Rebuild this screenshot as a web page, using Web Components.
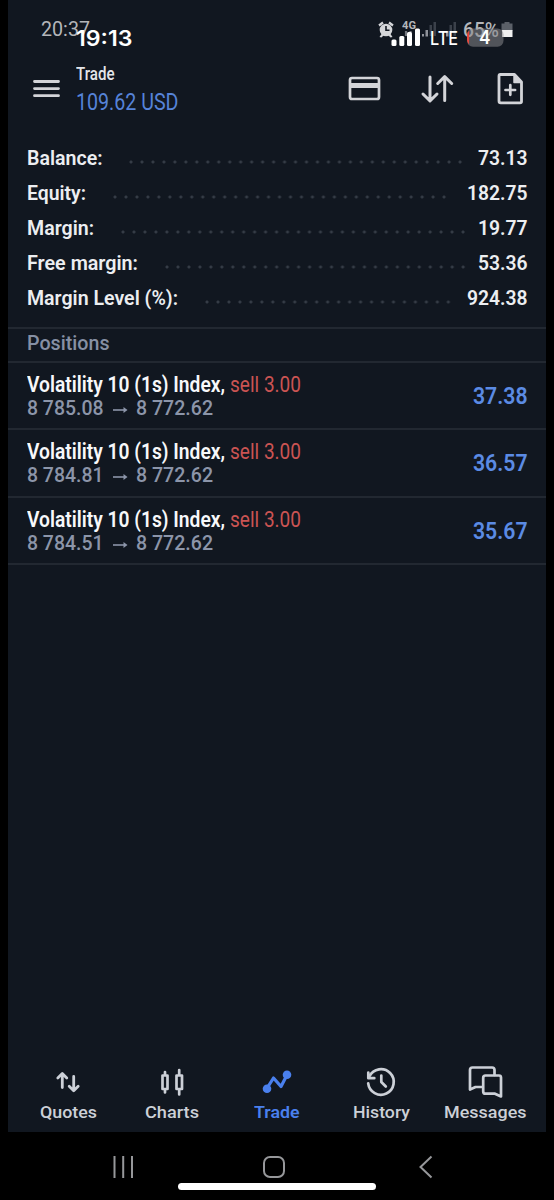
<!DOCTYPE html>
<html lang="en">
<head>
<meta charset="utf-8">
<title>Trade</title>
<style>
html,body{margin:0;background:#000}
body{font-family:Roboto,"Liberation Sans",sans-serif;width:554px;height:1200px;overflow:hidden}
</style>
</head>
<body>
<trade-screen></trade-screen>
<script>
function define(name, html, init) {
  const tpl = document.createElement('template');
  tpl.innerHTML = html;
  customElements.define(name, class extends HTMLElement {
    connectedCallback() {
      if (this.shadowRoot) return;
      const root = this.attachShadow({mode: 'open'});
      if (init) init.call(this, root, tpl);
      else root.append(tpl.content.cloneNode(true));
    }
  });
}

/* Text condensed or widened to an exact width (w), at font size s. */
define('fit-text', `<style>
:host{display:block;flex:none;white-space:pre}
span{display:inline-block;transform-origin:0 50%;white-space:pre}
</style><span><slot></slot></span>`, function (root, tpl) {
  root.append(tpl.content.cloneNode(true));
  const w = +this.getAttribute('w');
  this.style.fontSize = this.getAttribute('s') + 'px';
  const span = root.querySelector('span');
  const natural = span.getBoundingClientRect().width;
  this.style.width = w + 'px';
  if (natural) span.style.transform = 'scaleX(' + w / natural + ')';
});

define('status-overlay', `<style>
:host{display:block;position:relative;height:56px}
svg{position:absolute;left:0;top:0}
fit-text{position:absolute;line-height:24px}
.a{color:#b4b6ba}
.i{color:#fff;font-family:Inter,sans-serif}
</style>
<fit-text class="a" w="49" s="19.5" style="left:41px;top:17.5px">20:37</fit-text>
<fit-text class="a" w="14" s="11" style="left:401.5px;top:13.5px;font-weight:700">4G</fit-text>
<fit-text class="a" w="36" s="20" style="left:462.5px;top:17.5px;font-weight:500">65%</fit-text>
<svg width="554" height="56" viewBox="0 0 554 56">
<g fill="#d5d6d9"><circle cx="386" cy="30" r="6.3"/><path d="M381.5 34l-2 3 2 .5 2-2zM390.5 34l2 3-2 .5-2-2z"/></g>
<path d="M379 25.5l4-3M393 25.5l-4-3" stroke="#d5d6d9" stroke-width="2.2"/>
<path d="M386 26v4.300h3.500" fill="none" stroke="#111720" stroke-width="1.6"/>
<path d="M406 31v5M410.500 31v5" stroke="#777b82" stroke-width="2.200"/>
<g fill="#3b414a"><path d="M429.500 25h2.500v11h-2.500zM433.500 22h2.500v14h-2.500zM449.500 25h2.500v11h-2.500zM453.500 22h2.500v14h-2.500z"/></g>
<path d="M422 34h2v2.500h-2zM425.500 30h2.500v6.500h-2.500zM446 31h2.500v5.500H446z" fill="#8f9299"/>
<path d="M504.500 22h5v1.500h3V31h-11v-7.500h3z" fill="#5b6068"/>
<path d="M502 30h10.500v7H502z" fill="#f0f0f0"/>
<g fill="#fff"><rect x="391.500" y="39.500" width="5" height="6.500" rx="1.500"/><rect x="399.300" y="36" width="5" height="10" rx="1.500"/><rect x="407" y="32" width="5" height="14" rx="1.500"/><rect x="415" y="28.500" width="5" height="17.500" rx="1.500"/></g>
<rect x="467" y="28.500" width="36.500" height="18.300" rx="6" fill="#86878b" fill-opacity=".55"/>
<path d="M469.300 30.500Q467 32 467 35v5q0 2.500 2 4.500z" fill="#e6473d"/>
</svg>
<fit-text class="i" w="56.500" s="21.500" style="left:76px;top:26px;font-weight:600">19:13</fit-text>
<fit-text class="i" w="28" s="18.800" style="left:429.500px;top:26.700px;font-weight:500">LTE</fit-text>
<fit-text class="i" w="11.500" s="18" style="left:479.300px;top:25.500px;font-weight:600">4</fit-text>`);

define('app-header', `<style>
:host{display:flex;height:66px;align-items:flex-start;padding:0 21px 0 25px;box-sizing:border-box;color:#e3e5e9}
.t{display:flex;flex-direction:column;margin:4.500px auto 0 15.500px;line-height:26px}
.s{line-height:31px;color:#5683d8}
svg{display:block;fill:none;stroke:#d3d4d8;stroke-linecap:round;stroke-linejoin:round;flex:none}
.acts{display:flex;margin-top:16px}
</style>
<svg style="margin-top:22px" width="27" height="22" viewBox="33.500 78 27 22" stroke-width="2.800"><path d="M35 81.500h24M35 88.600h24M35 95.700h24"/></svg>
<div class="t"><fit-text w="38.500" s="18" style="font-weight:500">Trade</fit-text><fit-text class="s" w="102.500" s="23.500">109.62 USD</fit-text></div>
<div class="acts">
<svg width="34" height="34" viewBox="347 72 34 34" stroke-width="2.700"><rect x="350" y="78" width="29" height="21" rx="2"/><path d="M350 85.500h29" stroke-width="5" stroke-linecap="butt"/></svg>
<svg style="margin:0 41px 0 39px" width="34" height="34" viewBox="420 72 34 34" stroke-width="3"><path d="M430 77v23.500M423 94l7 6.800 7-6.800M444.700 100.500V77M437.700 83.500l7-6.800 7 6.800"/></svg>
<svg width="30" height="34" viewBox="495 72 30 34" stroke-width="2.800"><path d="M500.300 74.500h14.200l7 7.500v19.500q0 1.300-1.500 1.300h-19.200q-1.800 0-1.800-1.800V76q0-1.500 1.300-1.500z"/><path d="M514 75v7.500h7.500z" fill="#d3d4d8" stroke-width="1.500"/><path d="M510.300 85.200v9.600M505.500 90h9.600" stroke-width="2.700"/></svg>
</div>`);

define('summary-row', `<style>
:host{display:flex;height:35px;line-height:35px;align-items:center;color:#eceef1;font-weight:600}
i{flex:1;height:4px;margin-top:7px;background:radial-gradient(circle at 2px 2px,#353c46 1px,transparent 2px) 0 0/10.980px 4px repeat-x}
</style><slot name="l"></slot><i></i><slot name="v"></slot>`, function (root, tpl) {
  root.append(tpl.content.cloneNode(true));
  const i = root.querySelector('i');
  i.style.marginLeft = this.getAttribute('a') + 'px';
  i.style.marginRight = this.getAttribute('b') + 'px';
});

define('position-row', `<style>
:host{display:flex;height:67.600px;box-sizing:border-box;border-bottom:2px solid #222831;padding:8.400px 19px 0 19px;justify-content:space-between}
.r{display:flex}
.n{line-height:26px;color:#f7f8fa;font-weight:600}
.q{line-height:22px;color:#8c95a9;font-weight:500;align-items:center}
.k{color:#cb5453;font-weight:400;margin-left:4.500px}
.p{line-height:49px;color:#5b8be4;font-weight:600}
svg{margin:4px 8px 0 9px}
</style>
<div><div class="r n"><fit-text w="198" s="22.500">Volatility 10 (1s) Index,</fit-text><fit-text class="k" w="71" s="22.500">sell 3.00</fit-text></div>
<div class="r q"><fit-text class="o" w="76.500" s="21"></fit-text><svg width="15" height="8" viewBox="0 0 15 8"><path d="M0 4h13" stroke="#8c95a9" stroke-width="1.600"/><path d="M10.500 1l4 3-4 3z" fill="#8c95a9"/></svg><fit-text class="c" w="77" s="21">8 772.62</fit-text></div></div>
<fit-text class="p" w="54.500" s="24.500"></fit-text>`, function (root, tpl) {
  const f = tpl.content.cloneNode(true);
  f.querySelector('.o').textContent = this.getAttribute('open');
  f.querySelector('.p').textContent = this.getAttribute('profit');
  root.append(f);
});

define('nav-item', `<style>
:host{display:flex;flex-direction:column;align-items:center;color:#ccd0d7;width:104.300px;flex:none;line-height:22.500px;font-weight:500}
:host([on]){color:#4a80ee;font-weight:600}
</style><slot name="icon"></slot><slot></slot>`);

define('bottom-nav', `<style>
:host{display:flex;height:72px;padding-left:16px}
svg{display:block;width:44px;height:40px;fill:none;stroke:currentColor;stroke-linecap:round;stroke-linejoin:round}
nav-item{margin-top:1.500px}
</style>
<nav-item><svg slot="icon" viewBox="46 1062 44 40" stroke-width="2.800"><path d="M62.300 1087.500V1074M57.800 1078l4.500-4.500 4.500 4.500M73.700 1076.500v13.500M69.200 1086.300l4.500 4.500 4.500-4.500"/></svg><fit-text w="57" s="16.700">Quotes</fit-text></nav-item>
<nav-item><svg slot="icon" viewBox="150.500 1062 44 40" stroke-width="2.700" stroke-linejoin="miter"><path d="M163 1075.500h5v13.500h-5zM165.500 1072v3M165.500 1089.500v3M177 1075.500h5.500v13.500H177zM179.700 1070v5M179.700 1089.500v5"/></svg><fit-text w="54" s="16.700">Charts</fit-text></nav-item>
<nav-item on><svg slot="icon" viewBox="255 1062 44 40" stroke-width="3.200"><path d="M266.500 1089l7-11 7.500 8.500 6-11.500"/><g fill="currentColor" stroke="none"><circle cx="267" cy="1088.800" r="4.300"/><circle cx="287" cy="1074.800" r="4.300"/></g></svg><fit-text w="45.500" s="16.700">Trade</fit-text></nav-item>
<nav-item><svg slot="icon" viewBox="359 1062 44 40" stroke-width="2.700"><path d="M369.500 1076.200a12.800 12.800 0 1 1-1.300 7.200"/><path d="M368.300 1072.500v5.700h6M381.300 1075.500v6.500l4.500 4.500"/></svg><fit-text w="57" s="16.700">History</fit-text></nav-item>
<nav-item><svg slot="icon" viewBox="463.500 1062 44 40" stroke-width="2.700"><path d="M482 1087h-6l-5.500 2.500V1070q0-2.500 2.500-2.500h19.500q2.500 0 2.500 2.500v5"/><path d="M486 1075.500h13.500q2 0 2 2v19l-6-2.800H486q-2.300 0-2.300-2.300v-13.500q0-2.400 2.300-2.400z"/></svg><fit-text w="82.500" s="16.700">Messages</fit-text></nav-item>`);

define('system-bar', `<style>
:host{display:flex;height:68px;box-sizing:border-box;background:#000;position:relative;align-items:flex-start;padding-left:111px}
svg{fill:none;stroke:#96979a;stroke-width:2;margin-top:22px;flex:none}
b{position:absolute;left:178px;top:51px;width:198px;height:6.500px;border-radius:4px;background:#fff}
</style>
<svg width="24" height="26" viewBox="111 1154 24 26"><path d="M114.500 1156v22M123.200 1156v22M132 1156v22"/></svg>
<svg style="margin-left:126px" width="26" height="26" viewBox="261 1154 26 26"><rect x="264" y="1157" width="20" height="20" rx="6"/></svg>
<svg style="margin-left:130px" width="16" height="26" viewBox="417 1154 16 26"><path d="M431.500 1156.500L420.500 1167l11 10.500"/></svg>
<b></b>`);

define('trade-screen', `<style>
:host{display:flex;flex-direction:column;width:554px;height:1200px;background:#000}
main{display:flex;flex-direction:column;height:1132px;margin:0 8px;background:#111720}
status-overlay,bottom-nav{margin-left:-8px;margin-right:-8px}
.sum{padding:18.500px 18.500px 11px 19px}
.h{border-top:2px solid #222831;border-bottom:2px solid #222831;box-sizing:border-box;line-height:29px;padding-left:19px;color:#8690a4;font-weight:500;height:36px}
.sp{flex:1}
</style>
<main>
<status-overlay></status-overlay>
<app-header></app-header>
<div class="sum">
<summary-row a="26.5" b="14"><fit-text slot="l" w="75.500" s="19.500">Balance:</fit-text><fit-text slot="v" w="49.500" s="19.500">73.13</fit-text></summary-row>
<summary-row a="27" b="19"><fit-text slot="l" w="59" s="19.500">Equity:</fit-text><fit-text slot="v" w="60.500" s="19.500">182.75</fit-text></summary-row>
<summary-row a="26.5" b="12"><fit-text slot="l" w="67" s="19.500">Margin:</fit-text><fit-text slot="v" w="49.500" s="19.500">19.77</fit-text></summary-row>
<summary-row a="26.5" b="12"><fit-text slot="l" w="111" s="19.500">Free margin:</fit-text><fit-text slot="v" w="49.500" s="19.500">53.36</fit-text></summary-row>
<summary-row a="27" b="16"><fit-text slot="l" w="151" s="19.500">Margin Level (%):</fit-text><fit-text slot="v" w="60.500" s="19.500">924.38</fit-text></summary-row>
</div>
<div class="h"><fit-text w="82.500" s="19.500">Positions</fit-text></div>
<position-row open="8 785.08" profit="37.38"></position-row>
<position-row open="8 784.81" profit="36.57"></position-row>
<position-row open="8 784.51" profit="35.67"></position-row>
<div class="sp"></div>
<bottom-nav></bottom-nav>
</main>
<system-bar></system-bar>`);
</script>
</body>
</html>
